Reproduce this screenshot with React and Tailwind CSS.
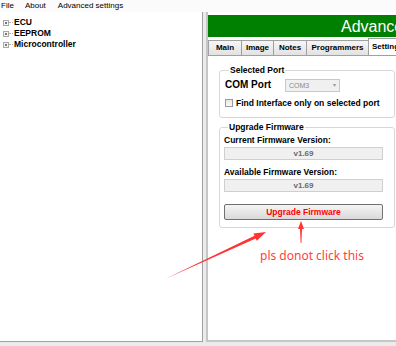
import React from 'react';

const TreeItem = ({ label }) => (
  <div className="flex items-center h-[11px]">
    <div className="ml-[3px] w-[6px] h-[6px] border border-[#a8a8a8] bg-[#f4f4f4] flex items-center justify-center">
      <div className="w-[2px] h-[2px] bg-[#7a7a7a]" />
    </div>
    <div className="w-[4px] border-t border-dotted border-[#b0b0b0]" />
    <span className="ml-[1px] text-[8.5px] font-bold text-black leading-none">{label}</span>
  </div>
);

const tabs = [
  { label: 'Main', w: 'w-[34px]' },
  { label: 'Image', w: 'w-[33px]' },
  { label: 'Notes', w: 'w-[34px]' },
  { label: 'Programmers', w: 'w-[63px]' },
];

const App = () => {
  return (
    <div className="relative w-[396px] h-[346px] bg-[#ebebeb] overflow-hidden font-['Liberation_Sans',Arial,sans-serif] text-black">
      {/* menu bar */}
      <div className="h-[12px] bg-[#fbfbfb] flex items-center text-[8px] leading-none">
        <span className="ml-[1px]">File</span>
        <span className="ml-[11px]">About</span>
        <span className="ml-[12px]">Advanced settings</span>
      </div>

      <div className="flex h-[330px]">
        {/* device tree */}
        <div className="w-[203px] bg-white border-r border-b border-[#a0a0a0] pt-[5px]">
          <TreeItem label="ECU" />
          <TreeItem label="EEPROM" />
          <TreeItem label="Microcontroller" />
        </div>

        {/* right side */}
        <div className="ml-[3px] flex-1 min-w-0 bg-white border-l-2 border-b-2 border-[#c6c6c6] flex flex-col pt-[3px] overflow-hidden">
          <div className="h-[22px] bg-[#008000] pl-[133px] overflow-hidden">
            <span className="text-white text-[16px] leading-[22px] whitespace-nowrap">Advanced settings</span>
          </div>

          <div className="h-[19px] flex items-end border-b border-[#a0a0a0] overflow-hidden">
            {tabs.map((t) => (
              <div
                key={t.label}
                className={`${t.w} shrink-0 h-[15px] -ml-px first:ml-0 border border-b-0 border-[#a0a0a0] bg-gradient-to-b from-[#f6f6f6] to-[#e2e2e2] flex items-center justify-center text-[8px] font-bold leading-none`}
              >
                {t.label}
              </div>
            ))}
            <div className="w-[44px] shrink-0 h-[18px] -mb-px -ml-px border border-b-0 border-[#a0a0a0] bg-white flex items-start pt-[4px] pl-[3px] text-[8px] font-bold leading-none whitespace-nowrap">
              Settings
            </div>
          </div>

          <div className="pl-[11px] pt-[9px]">
            <fieldset className="w-[176px] border border-[#d8d8d8] rounded-[3px] pl-[5px] pb-[9px]">
              <legend className="ml-[4px] px-[1px] text-[8.5px] font-bold leading-[10px]">Selected Port</legend>
              <div className="flex items-center h-[14px] mt-[3px]">
                <span className="w-[60px] text-[10px] font-bold leading-none">COM Port</span>
                <div className="w-[55px] h-[13px] border border-[#c8c8c8] bg-[#f0f0f0] flex items-center justify-between px-[3px]">
                  <span className="text-[7px] text-[#8a8a8a] leading-none">COM3</span>
                  <span className="text-[6px] text-[#9a9a9a] leading-none">▾</span>
                </div>
              </div>
              <div className="flex items-center h-[10px] mt-[6px]">
                <div className="w-[8px] h-[8px] border border-[#9a9a9a] bg-gradient-to-b from-[#e6e6e6] to-[#fafafa]" />
                <span className="ml-[3px] text-[8.5px] font-bold leading-none whitespace-nowrap">Find Interface only on selected port</span>
              </div>
            </fieldset>

            <fieldset className="mt-[4px] w-[176px] border border-[#d8d8d8] rounded-[3px] pl-[4px] pb-[7px]">
              <legend className="ml-[4px] px-[1px] text-[8.5px] font-bold leading-[10px]">Upgrade Firmware</legend>
              <div className="mt-[3px] text-[8.5px] font-bold leading-[10px]">Current Firmware Version:</div>
              <div className="mt-[2px] w-[159px] h-[13px] border border-[#cfcfcf] bg-[#f0f0f0] flex items-center justify-center text-[8px] font-bold text-[#6a6a6a] leading-none">
                v1.69
              </div>
              <div className="mt-[7px] text-[8.5px] font-bold leading-[10px]">Available Firmware Version:</div>
              <div className="mt-[2px] w-[159px] h-[13px] border border-[#cfcfcf] bg-[#f0f0f0] flex items-center justify-center text-[8px] font-bold text-[#6a6a6a] leading-none">
                v1.69
              </div>
              <button className="mt-[12px] w-[159px] h-[16px] border border-[#707070] rounded-[2px] bg-gradient-to-b from-[#f4f4f4] to-[#dadada] flex items-center justify-center text-[8.5px] font-bold text-[#ff0000] leading-none">
                Upgrade Firmware
              </button>
            </fieldset>
          </div>
        </div>
      </div>

      {/* annotation */}
      <svg className="absolute inset-0 pointer-events-none" width="396" height="346">
        <polygon
          points="165,279 255.7,238.5 256.8,240.7 266,232 253.4,233.5 254.5,235.7"
          fill="#ff3333"
        />
        <polygon points="301,221 304,229 302,229 301.4,243 300.6,243 300,229 298,229" fill="#ff3333" />
      </svg>
      <div className="absolute left-[260px] top-[250px] text-[12px] leading-none text-[#ff3f3f] font-['Noto_Sans',sans-serif] whitespace-nowrap">
        pls donot click this
      </div>
    </div>
  );
};

export default App;
